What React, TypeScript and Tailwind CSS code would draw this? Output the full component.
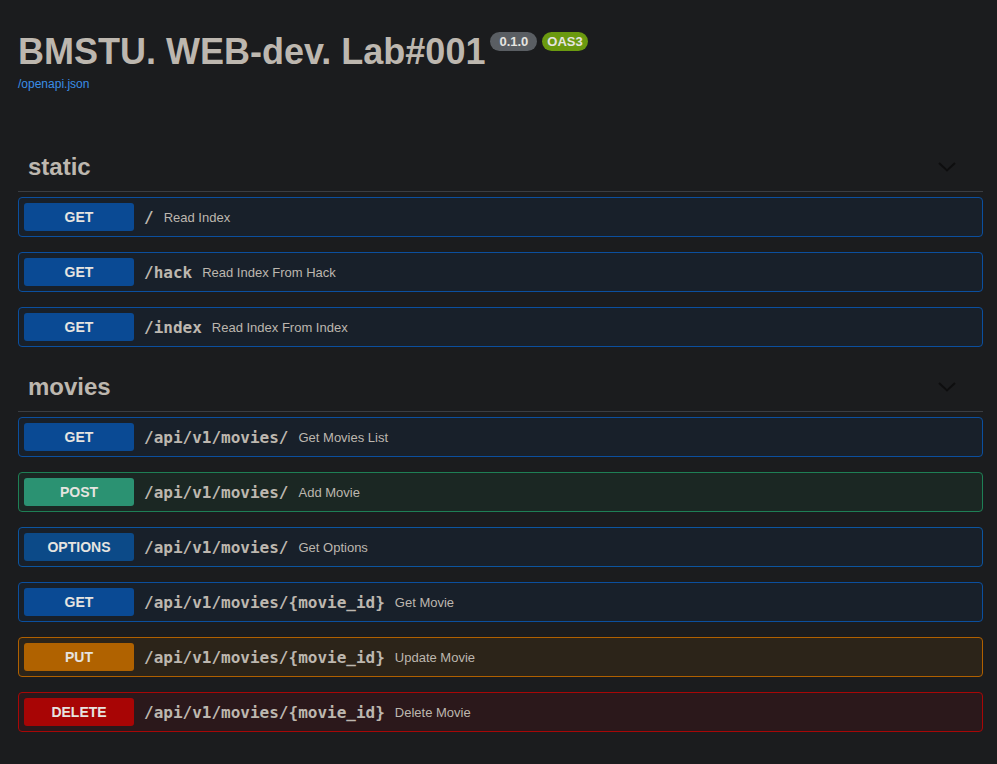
import React from 'react';

type Method = 'GET' | 'POST' | 'OPTIONS' | 'PUT' | 'DELETE';

const methodStyles: Record<Method, { row: string; badge: string }> = {
  GET: { row: 'bg-[#18202a] border-[#0b4f9e]', badge: 'bg-[#0a4a94]' },
  POST: { row: 'bg-[#1b2723] border-[#1e7f55]', badge: 'bg-[#2b9272]' },
  OPTIONS: { row: 'bg-[#18202a] border-[#0c559f]', badge: 'bg-[#0c4a88]' },
  PUT: { row: 'bg-[#2c2419] border-[#b06000]', badge: 'bg-[#b06200]' },
  DELETE: { row: 'bg-[#2b181b] border-[#a70707]', badge: 'bg-[#a80505]' },
};

const Chevron = () => (
  <svg width="18" height="10" viewBox="0 0 18 10" fill="none">
    <path d="M1 1 L9 8.5 L17 1" stroke="#0e0e0f" strokeWidth="2" />
  </svg>
);

const OpRow = ({ method, path, summary }: { method: Method; path: string; summary: string }) => {
  const s = methodStyles[method];
  return (
    <div className={`flex items-center h-[40px] mb-[15px] border rounded-[4px] px-[5px] ${s.row}`}>
      <div
        className={`w-[110px] h-[28px] rounded-[3px] flex items-center justify-center text-[14px] font-bold text-[#e6e4e0] ${s.badge}`}
      >
        {method}
      </div>
      <span className="mt-[2px] px-[10px] text-[16px] font-bold text-[#bdb7af] font-['DejaVu_Sans_Mono',monospace]">
        {path}
      </span>
      <span className="mt-[2px] text-[13px] text-[#bdb7af]">{summary}</span>
    </div>
  );
};

const Section = ({ name, children }: { name: string; children: React.ReactNode }) => (
  <div>
    <div className="flex items-center justify-between h-[50px] border-b border-[#3a3d42] pl-[10px] mb-[5px]">
      <span className="text-[24px] font-bold text-[#bdb7af]">{name}</span>
      <div className="mr-[27px] flex items-center">
        <Chevron />
      </div>
    </div>
    {children}
  </div>
);

export default function App() {
  return (
    <div className="min-h-[764px] bg-[#1b1c1e] font-['Liberation_Sans',Arial,sans-serif] pl-[18px] pr-[14px] pt-[31px] pb-[10px]">
      <div className="flex items-start">
        <h2 className="text-[36px] leading-[41px] font-bold text-[#bdb7af]">BMSTU. WEB-dev. Lab#001</h2>
        <div className="flex items-center gap-[5px] ml-[5px] mt-[1px]">
          <span className="h-[19px] px-[9px] rounded-full bg-[#5a5e63] text-[#e6e4e0] text-[13px] font-bold flex items-center">
            0.1.0
          </span>
          <span className="h-[19px] px-[5px] rounded-full bg-[#6b9a10] text-[#e6e4e0] text-[13px] font-bold flex items-center">
            OAS3
          </span>
        </div>
      </div>
      <div className="mt-[5px] text-[12px] leading-[14px] text-[#3a8ee6]">/openapi.json</div>

      <div className="mt-[51px]">
        <Section name="static">
          <OpRow method="GET" path="/" summary="Read Index" />
          <OpRow method="GET" path="/hack" summary="Read Index From Hack" />
          <OpRow method="GET" path="/index" summary="Read Index From Index" />
        </Section>
        <Section name="movies">
          <OpRow method="GET" path="/api/v1/movies/" summary="Get Movies List" />
          <OpRow method="POST" path="/api/v1/movies/" summary="Add Movie" />
          <OpRow method="OPTIONS" path="/api/v1/movies/" summary="Get Options" />
          <OpRow method="GET" path="/api/v1/movies/{movie_id}" summary="Get Movie" />
          <OpRow method="PUT" path="/api/v1/movies/{movie_id}" summary="Update Movie" />
          <OpRow method="DELETE" path="/api/v1/movies/{movie_id}" summary="Delete Movie" />
        </Section>
      </div>
    </div>
  );
}
